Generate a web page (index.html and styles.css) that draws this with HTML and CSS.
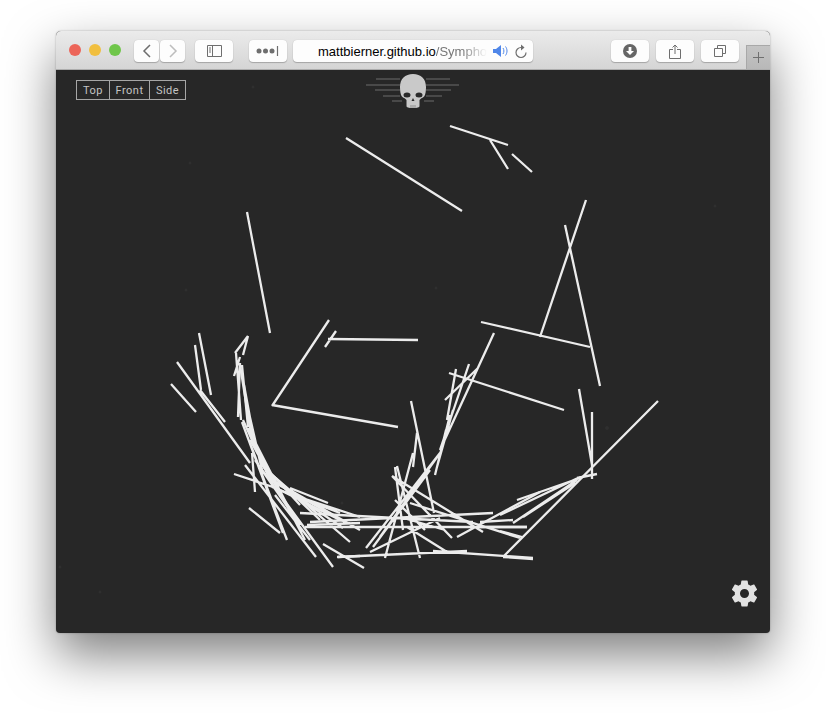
FILE: index.html
```html
<!DOCTYPE html>
<html>
<head>
    <title>Symphony</title>
    <meta charset="UTF-8">
    <link rel="stylesheet" href="styles.css">
</head>
<body>
    <div class="window">
        <div class="toolbar">
            <div class="lights">
                <span class="light red"></span>
                <span class="light yellow"></span>
                <span class="light green"></span>
            </div>
            <div class="nav-buttons">
                <div class="tool-button nav"><svg width="12" height="18" viewBox="0 0 12 18"><path d="M9 3 3 9l6 6" fill="none" stroke="#6e6e6e" stroke-width="1.500"/></svg></div>
                <div class="tool-button nav"><svg width="12" height="18" viewBox="0 0 12 18"><path d="M3 3l6 6-6 6" fill="none" stroke="#bdbdbd" stroke-width="1.500"/></svg></div>
            </div>
            <div class="tool-button wide sidebar-button"><svg width="15" height="12" viewBox="0 0 15 12"><path d="M.5.5h14v11H.5zM5.500 .5v11" fill="none" stroke="#6e6e6e"/><path d="M2 3h2M2 5h2M2 7h2" stroke="#6e6e6e"/></svg></div>
            <div class="tool-button wide dots-button"><svg width="24" height="12" viewBox="0 0 24 12"><circle cx="3" cy="6" r="2.500" fill="#6e6e6e"/><circle cx="9.500" cy="6" r="2.500" fill="#6e6e6e"/><circle cx="16" cy="6" r="2.500" fill="#6e6e6e"/><path d="M21.500 1v10" stroke="#6e6e6e" stroke-width="1.200"/></svg></div>
            <div class="url-bar">
                <span class="url-host">mattbierner.github.io</span><span class="url-path">/Sympho</span>
                <svg class="url-sound" width="16" height="12" viewBox="0 0 16 12"><path d="M0 4h3l5-4v12l-5-4H0z" fill="#4f86e8"/><path d="M10 3c1.200 1.800 1.200 4.200 0 6M12.500 1.500c2 2.700 2 6.300 0 9" fill="none" stroke="#4f86e8"/></svg>
                <svg class="url-reload" width="14" height="16" viewBox="0 0 14 16"><path d="M7 4.500a5 5 0 1 0 5 5" fill="none" stroke="#6e6e6e" stroke-width="1.200"/><path d="M7 1.500 10.500 4.500 7 7.500z" fill="#6e6e6e"/></svg>
            </div>
            <div class="tool-button wide download-button"><svg width="14" height="14" viewBox="0 0 14 14"><circle cx="7" cy="7" r="7" fill="#666"/><path d="M5.600 3h2.800v4H11l-4 4-4-4h2.600z" fill="#fff"/></svg></div>
            <div class="tool-button wide share-button"><svg width="12" height="15" viewBox="0 0 12 15"><path d="M4 5.500H.5v9h11v-9H8M6 10V1M3.500 3.500 6 1l2.500 2.500" fill="none" stroke="#6e6e6e"/></svg></div>
            <div class="tool-button wide tabs-button"><svg width="12" height="12" viewBox="0 0 12 12"><path d="M.5 3.500h8v8h-8zM3.500 3.500v-3h8v8h-3" fill="none" stroke="#6e6e6e"/></svg></div>
            <div class="new-tab"><svg width="11" height="11" viewBox="0 0 11 11"><path d="M5.500 0v11M0 5.500h11" stroke="#6f6f6f"/></svg></div>
        </div>

        <div class="stage">
            <!-- coordenadas da pagina, por isso o viewBox comeca em 56 70 -->
            <svg class="sticks" width="714" height="563" viewBox="56 70 714 563">
                <g fill="#2f2f2f">
                    <circle cx="253" cy="87" r="1.500"/>
                    <circle cx="190" cy="163" r="1.500"/>
                    <circle cx="186" cy="290" r="1.500"/>
                    <circle cx="436" cy="288" r="1.500"/>
                    <circle cx="607" cy="428" r="2"/>
                    <circle cx="342" cy="503" r="1.500"/>
                    <circle cx="715" cy="206" r="1.500"/>
                    <circle cx="100" cy="592" r="1.500"/>
                    <circle cx="60" cy="567" r="1.500"/>
                </g>
                <path class="stick" d="M346 138 462 211M450 126 508 145M490 140 508 169M512 154 532 172M247 212 270 333M586 200 540 337M565 225 600 386M481 322 590 347M329 320 272 406M272 405 398 427M328 339 418 340M336 331 325 347M449 373 564 410M579 389 592 465M592 412 592 479M658 401 503 557"/>
                <path class="stick" d="M199 333 211 395M195 345 201 390M177 362 250 463M171 384 196 412M200 390 225 422M248 336 235 353M248 336 243 355M236 353 241 420M234 376 240 357M238 417 240 363M242 365 248 427M242 422 283 533M234 474 273 487M249 508 280 533M255 492 252 453M290 488 328 503M245 465 316 557M260 467 333 567M250 443 287 540M263 467 350 542M267 477 360 530M277 483 343 528M287 493 360 517M323 544 364 568M307 525 360 523M337 557 360 556M272 487 340 513M255 460 300 525M270 480 345 522"/>
                <path class="stick" d="M243 420 270 480M248 428 300 530M250 440 295 520M246 400 262 470M240 365 252 440M244 385 256 450M258 450 305 540M254 445 290 510M262 465 320 520M280 490 340 520M275 495 310 540M268 470 300 505"/>
                <path class="stick" d="M300 513 473 522M310 522 493 513M305 527 527 527M338 557 467 551M433 551 533 558M411 401 434 513M417 433 413 467M413 453 385 558M397 466 420 558M395 467 403 530M392 476 452 538M392 476 483 532M366 548 440 453M370 552 440 518M494 333 440 450M469 364 440 450M456 369 447 420M445 400 478 368M440 453 380 537M430 470 373 547M453 410 437 467M410 503 520 538M407 527 447 552M457 537 540 492M400 517 445 530M446 430 435 475M450 415 440 455M395 500 425 530"/>
                <path class="stick" d="M500 515 580 477M517 500 580 478M513 523 577 480M523 517 575 483M480 522 513 520M480 527 527 527M500 531 522 537M503 557 533 559M577 478 597 474"/>
            </svg>

            <div class="views">
                <span class="view view-top">Top</span>
                <span class="view view-front">Front</span>
                <span class="view view-side">Side</span>
            </div>

            <svg class="skull" width="94" height="36" viewBox="0 0 94 36">
                <path d="M9 5H33M-1 11H33M8 16H33M16 22H33M25 27H35M59 5H83M59 11H92M59 16H84M59 22H75M57 27H67" stroke="#565656" stroke-width="1.500"/>
                <path d="M46 0c8 0 13 5 13 13 0 4-.5 7-1.500 9-1 1.500-3 2-4 3l-1 1v6c0 1.500-2 2-6.500 2s-6.500-.5-6.500-2v-6l-1-1c-1-1-3-1.500-4-3-1-2-1.500-5-1.500-9C33 5 38 0 46 0z" fill="#c9c9c9"/>
                <ellipse cx="40" cy="21" rx="3.500" ry="2.500" fill="#2a2a2a"/>
                <ellipse cx="52" cy="21" rx="3.500" ry="2.500" fill="#2a2a2a"/>
                <path d="M46 24l-1.500 3h3z" fill="#2a2a2a"/>
                <path d="M44 31v3M46 31v3M48 31v3" stroke="#777" stroke-width=".7"/>
            </svg>

            <svg class="gear" width="31" height="31" viewBox="0 0 24 24"><path fill="#e2e2e2" d="M19.43 12.98c.04-.32.07-.64.07-.98s-.03-.66-.07-.98l2.11-1.65c.19-.15.24-.42.12-.64l-2-3.46c-.12-.22-.39-.3-.61-.22l-2.49 1c-.52-.4-1.08-.73-1.69-.98l-.38-2.65C14.46 2.18 14.25 2 14 2h-4c-.25 0-.46.18-.49.42l-.38 2.65c-.61.25-1.17.59-1.69.98l-2.49-1c-.23-.09-.49 0-.61.22l-2 3.46c-.13.22-.07.49.12.64l2.11 1.65c-.04.32-.07.65-.07.98s.03.66.07.98l-2.11 1.65c-.19.15-.24.42-.12.64l2 3.46c.12.22.39.3.61.22l2.49-1c.52.4 1.08.73 1.69.98l.38 2.65c.03.24.24.42.49.42h4c.25 0 .46-.18.49-.42l.38-2.65c.61-.25 1.17-.59 1.69-.98l2.49 1c.23.09.49 0 .61-.22l2-3.46c.12-.22.07-.49-.12-.64l-2.11-1.65zM12 15.5c-1.93 0-3.5-1.57-3.5-3.5s1.57-3.500 3.500-3.500 3.500 1.570 3.500 3.500-1.570 3.500-3.500 3.500z"/></svg>
        </div>
    </div>
</body>
</html>
```

FILE: styles.css
```css
/* pagina e janela */
html, body {
    height: 100%;
}
body {
    margin: 0;
    padding: 31px 56px 0;
    box-sizing: border-box;
    background-color: #ffffff;
    font-family: "Liberation Sans", Arial, sans-serif;
    overflow: hidden;
}
.window {
    width: 714px;
    height: 602px;
    border-radius: 5px 5px 4px 4px;
    background-color: #272727;
    box-shadow: 0 22px 50px rgba(0, 0, 0, 0.5), 0 0 2px rgba(0, 0, 0, 0.3);
    overflow: hidden;
    display: flex;
    flex-direction: column;
}

/* barra do navegador */
.toolbar {
    height: 29px;
    flex: none;
    display: flex;
    align-items: flex-start;
    padding: 9px 0 0 13px;
    background: linear-gradient(#ebebeb, #d5d5d5);
    border-bottom: 1px solid #adadad;
}
.lights {
    display: flex;
    gap: 8px;
    margin-top: 4px;
    margin-right: 13px;
}
.light {
    width: 12px;
    height: 12px;
    border-radius: 50%;
}
.red {
    background-color: #ec6559;
}
.yellow {
    background-color: #f1bf3f;
}
.green {
    background-color: #6fc64a;
}
.tool-button {
    height: 22px;
    background-color: #fdfdfd;
    border-radius: 4px;
    box-shadow: 0 1px 1px rgba(0, 0, 0, 0.22), 0 0 1px rgba(0, 0, 0, 0.2);
    display: flex;
    align-items: center;
    justify-content: center;
}
.nav-buttons {
    display: flex;
    gap: 1px;
    margin-right: 10px;
}
.nav {
    width: 25px;
}
.wide {
    width: 38px;
}
.sidebar-button {
    margin-right: 16px;
}
.dots-button {
    margin-right: 6px;
}
.url-bar {
    width: 240px;
    height: 22px;
    box-sizing: border-box;
    padding: 0 5px 0 25px;
    background-color: #fdfdfd;
    border-radius: 4px;
    box-shadow: 0 1px 1px rgba(0, 0, 0, 0.22), 0 0 1px rgba(0, 0, 0, 0.2);
    display: flex;
    align-items: center;
    font-size: 13px;
    white-space: nowrap;
    margin-right: 78px;
}
.url-host {
    color: #000000;
}
.url-path {
    color: #777777;
    -webkit-mask-image: linear-gradient(90deg, #000 50%, transparent);
    mask-image: linear-gradient(90deg, #000 50%, transparent);
}
.url-sound {
    margin-left: auto;
    flex: none;
}
.url-reload {
    margin-left: 5px;
    flex: none;
}
.download-button, .share-button, .tabs-button {
    margin-right: 7px;
}
.new-tab {
    width: 24px;
    height: 24px;
    margin-top: 5px;
    box-sizing: border-box;
    background: linear-gradient(#c4c4c4, #b8b8b8);
    border-top: 1px solid #a8a8a8;
    border-left: 1px solid #a8a8a8;
    display: flex;
    align-items: center;
    justify-content: center;
}

/* area do desenho */
.stage {
    position: relative;
    flex: 1;
}
.sticks {
    display: block;
}
.stick {
    fill: none;
    stroke: #ececec;
    stroke-width: 2.3;
}
.views {
    position: absolute;
    left: 20px;
    top: 10px;
    display: flex;
    height: 20px;
    box-sizing: border-box;
    border: 1px solid #a6a6a6;
    color: #c4c4c4;
    font-family: Roboto, "Liberation Sans", sans-serif;
    font-size: 11px;
    letter-spacing: 0.5px;
}
.view {
    display: flex;
    align-items: center;
    justify-content: center;
    box-sizing: border-box;
    border-left: 1px solid #a6a6a6;
}
.view-top {
    width: 32px;
    border-left: none;
}
.view-front {
    width: 40px;
}
.view-side {
    width: 36px;
}
.skull {
    position: absolute;
    left: 311px;
    top: 4px;
    overflow: visible;
}
.gear {
    position: absolute;
    right: 10px;
    bottom: 24px;
}
```
